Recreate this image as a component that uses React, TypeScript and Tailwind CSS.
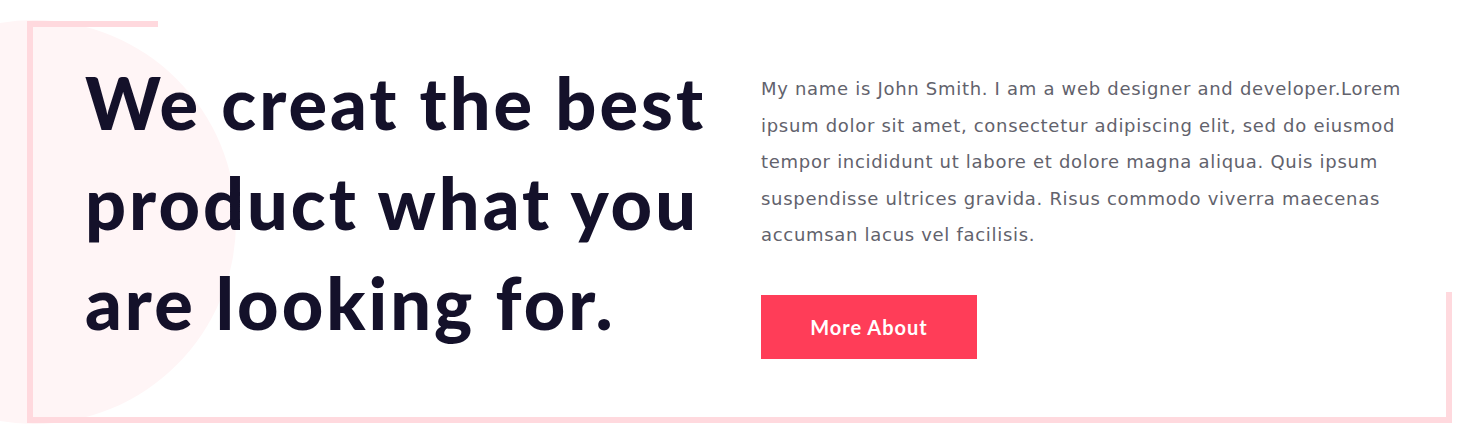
import React from 'react';

export default function App() {
  return (
    <div className="isolate w-[1475px] h-[448px] bg-white overflow-hidden pt-[21px] pl-[27px]">
      <section className="relative w-[1425px] h-[402px] border-l-[6px] border-b-[6px] border-[#ffd9de]">
        {/* soft circle behind the heading */}
        <div className="absolute -z-10 left-[-201px] top-[-1px] w-[404px] h-[404px] rounded-full bg-[#fff5f6]" />
        {/* partial top and right frame strokes */}
        <div className="absolute left-[-6px] top-0 w-[131px] h-[6px] bg-[#ffd9de]" />
        <div className="absolute right-0 bottom-[-6px] w-[6px] h-[131px] bg-[#ffd9de]" />

        <div className="relative flex pl-[52px]">
          <h1 className="w-[676px] shrink-0 pt-[31px] font-['Lato',sans-serif] font-black tracking-[3px] text-[72px] leading-[100px] text-[#14112a]">
            <span className="block">We creat the best</span>
            <span className="block">product what you</span>
            <span className="block">are looking for.</span>
          </h1>
          <div className="pt-[50px]">
            <p className="font-['DejaVu_Sans',sans-serif] text-[18px] tracking-[0.7px] leading-[36.6px] text-[#62626c]">
              My name is John Smith. I am a web designer and developer.Lorem
              <br />
              ipsum dolor sit amet, consectetur adipiscing elit, sed do eiusmod
              <br />
              tempor incididunt ut labore et dolore magna aliqua. Quis ipsum
              <br />
              suspendisse ultrices gravida. Risus commodo viverra maecenas
              <br />
              accumsan lacus vel facilisis.
            </p>
            <button className="mt-[41px] w-[216px] h-[64px] bg-[#ff3d58] text-white font-['Lato',sans-serif] font-bold tracking-[1px] text-[20px]">
              More About
            </button>
          </div>
        </div>
      </section>
    </div>
  );
}
